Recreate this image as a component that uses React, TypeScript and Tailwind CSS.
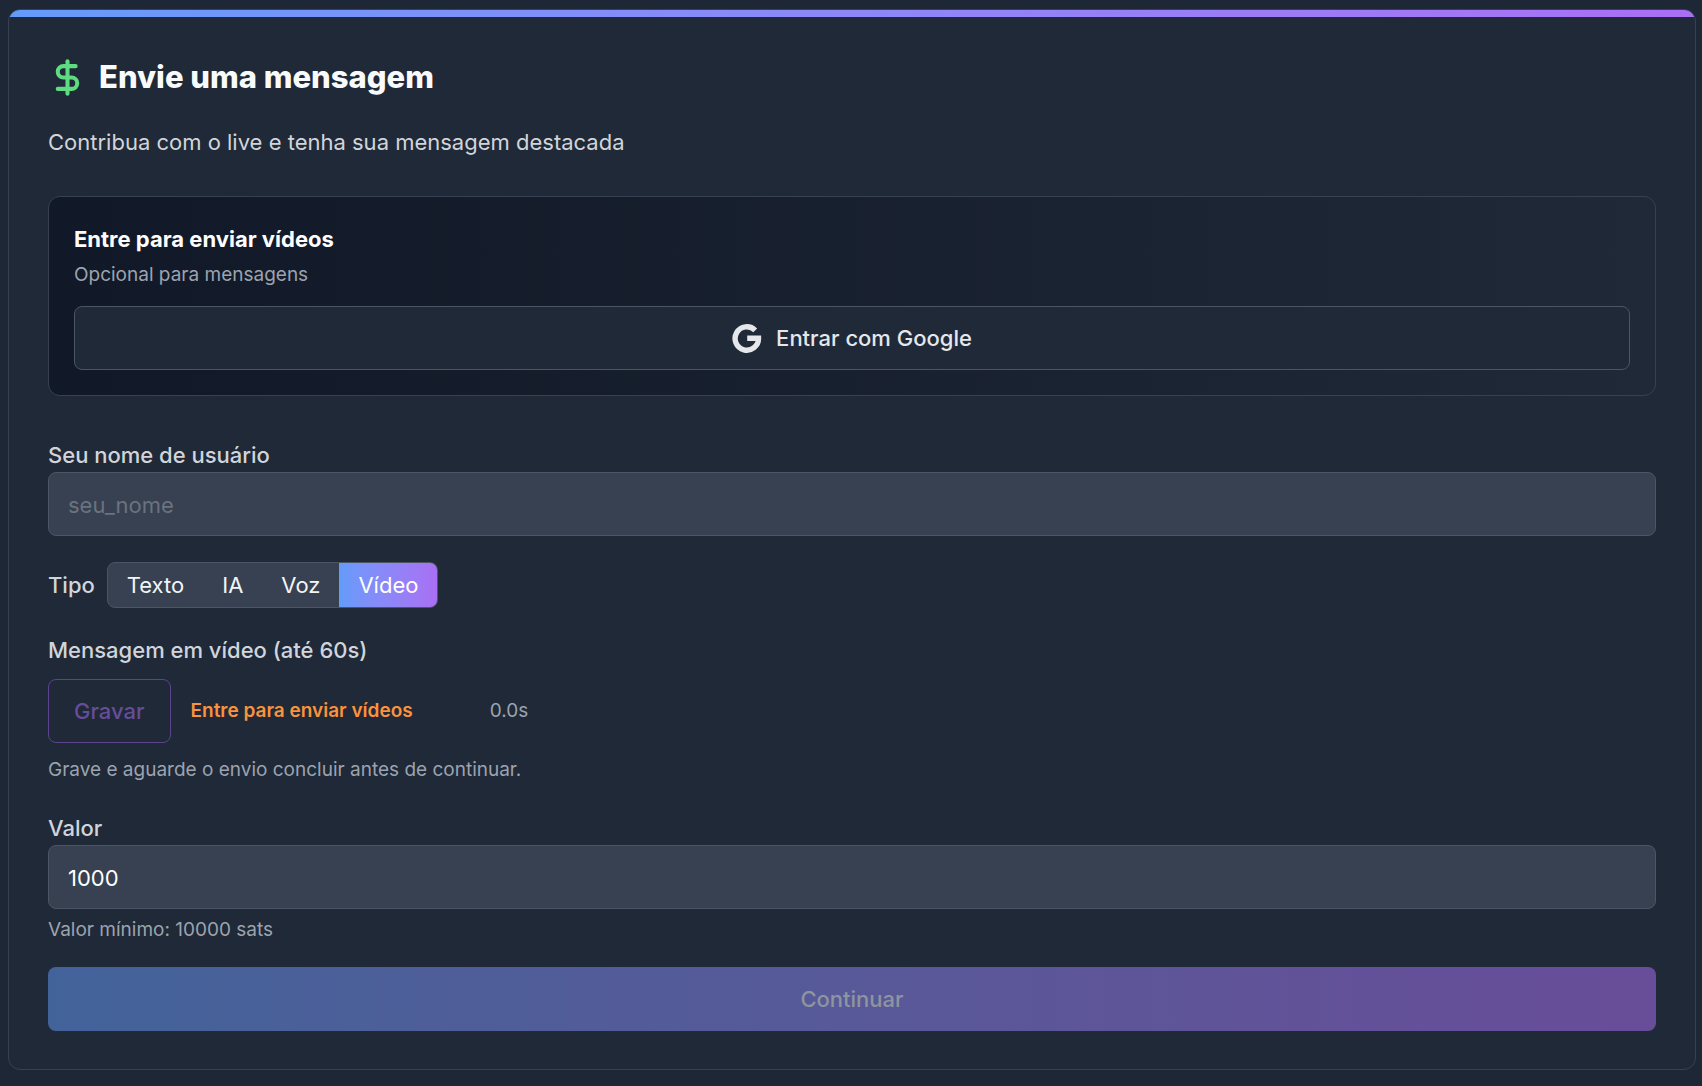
import React, { useState } from 'react';
import { DollarSign } from 'lucide-react';
import clsx from 'clsx';

type MessageType = 'text' | 'ai' | 'voice' | 'video';

const MESSAGE_TYPES: { id: MessageType; label: string }[] = [
  { id: 'text', label: 'Texto' },
  { id: 'ai', label: 'IA' },
  { id: 'voice', label: 'Voz' },
  { id: 'video', label: 'Vídeo' },
];

const inputClass =
  'block h-16 w-full rounded-lg border border-[#4b5563] bg-[#374151] px-[19px] pt-[2px] text-white placeholder-[#6b7280] outline-none';

const labelClass = 'block leading-[33px] font-medium text-[#d1d5db]';

function GoogleIcon() {
  return (
    <svg viewBox="0 0 30 30" className="h-[30px] w-[30px]" fill="none" stroke="currentColor" strokeWidth="5.4">
      <path d="M23.2 7.3A11.7 11.7 0 1 0 26.5 15.2H15.2" />
    </svg>
  );
}

function LoginPanel() {
  return (
    <section className="mt-[38px] rounded-xl border border-[#374151] bg-linear-to-r from-[#111827] to-[#1f2937] px-[25px] pt-[26px] pb-[25px]">
      <h2 className="text-[22px] leading-8 font-bold text-white">Entre para enviar vídeos</h2>
      <p className="mt-1 text-[19px] leading-8 text-[#9ca3af]">Opcional para mensagens</p>
      <button
        type="button"
        className="mt-[15px] flex h-16 w-full items-center justify-center gap-[14px] rounded-lg border border-[#4b5563] bg-[#1f2937] font-medium text-[#e5e7eb]"
      >
        <GoogleIcon />
        Entrar com Google
      </button>
    </section>
  );
}

export default function App() {
  const [username, setUsername] = useState('');
  const [type, setType] = useState<MessageType>('video');
  const [amount, setAmount] = useState('1000');

  return (
    <main className="min-h-screen bg-[#1d2735] pt-[9px] pr-[6px] pb-[15px] pl-2 font-['Inter',sans-serif] text-[22px] leading-8">
      <div className="overflow-hidden rounded-xl border border-[#374151] bg-[#1f2937]">
        <div className="h-[7px] bg-linear-to-r from-[#649bfa] to-[#a96ff5]" />
        <div className="px-[39px] pt-9 pb-[38px]">
          <h1 className="flex items-center gap-3 text-[31px] leading-12 font-extrabold text-[#f9fafb]">
            <DollarSign strokeWidth={2.5} className="h-[39px] w-[39px] text-[#5fdc82]" />
            Envie uma mensagem
          </h1>
          <p className="mt-[25px] text-[#d1d5db]">Contribua com o live e tenha sua mensagem destacada</p>

          <LoginPanel />

          <form className="mt-[43px]" onSubmit={(e) => e.preventDefault()}>
            <label htmlFor="username" className={labelClass}>
              Seu nome de usuário
            </label>
            <input
              id="username"
              className={inputClass}
              placeholder="seu_nome"
              value={username}
              onChange={(e) => setUsername(e.target.value)}
            />

            <div className="mt-[26px] flex items-center gap-3">
              <span id="type-label" className="font-medium text-[#d1d5db]">Tipo</span>
              <div
                role="group"
                aria-labelledby="type-label"
                className="flex overflow-hidden rounded-lg border border-[#4b5563] bg-[#374151]"
              >
                {MESSAGE_TYPES.map(({ id, label }) => (
                  <button
                    key={id}
                    type="button"
                    aria-pressed={type === id}
                    onClick={() => setType(id)}
                    className={clsx(
                      'h-11 px-[19px]',
                      type === id
                        ? 'bg-linear-to-r from-[#649bfa] to-[#a96ff5] text-white'
                        : 'text-[#f3f4f6]'
                    )}
                  >
                    {label}
                  </button>
                ))}
              </div>
            </div>

            <p className="mt-[26px] font-medium text-[#d1d5db]">Mensagem em vídeo (até 60s)</p>
            <div className="mt-[13px] flex items-center">
              <button
                type="button"
                disabled
                className="h-16 rounded-lg border border-[#5b4390] px-[25px] font-medium text-[#664d9a]"
              >
                Gravar
              </button>
              <span className="ml-5 text-[19px] font-semibold text-[#fb923c]">Entre para enviar vídeos</span>
              <span className="ml-[77px] text-[19px] text-[#9ca3af]">0.0s</span>
            </div>
            <p className="mt-[11px] text-[19px] text-[#9ca3af]">
              Grave e aguarde o envio concluir antes de continuar.
            </p>

            <div className="mt-[26px]">
              <label htmlFor="amount" className={labelClass}>
                Valor
              </label>
              <input
                id="amount"
                className={inputClass}
                inputMode="numeric"
                value={amount}
                onChange={(e) => setAmount(e.target.value)}
              />
            </div>
            <p className="mt-[5px] text-[19px] text-[#9ca3af]">Valor mínimo: 10000 sats</p>

            <button
              type="submit"
              disabled
              className="mt-[21px] h-16 w-full rounded-lg bg-linear-to-r from-[#426399] to-[#684d98] font-medium text-[#8f959f]"
            >
              Continuar
            </button>
          </form>
        </div>
      </div>
    </main>
  );
}
